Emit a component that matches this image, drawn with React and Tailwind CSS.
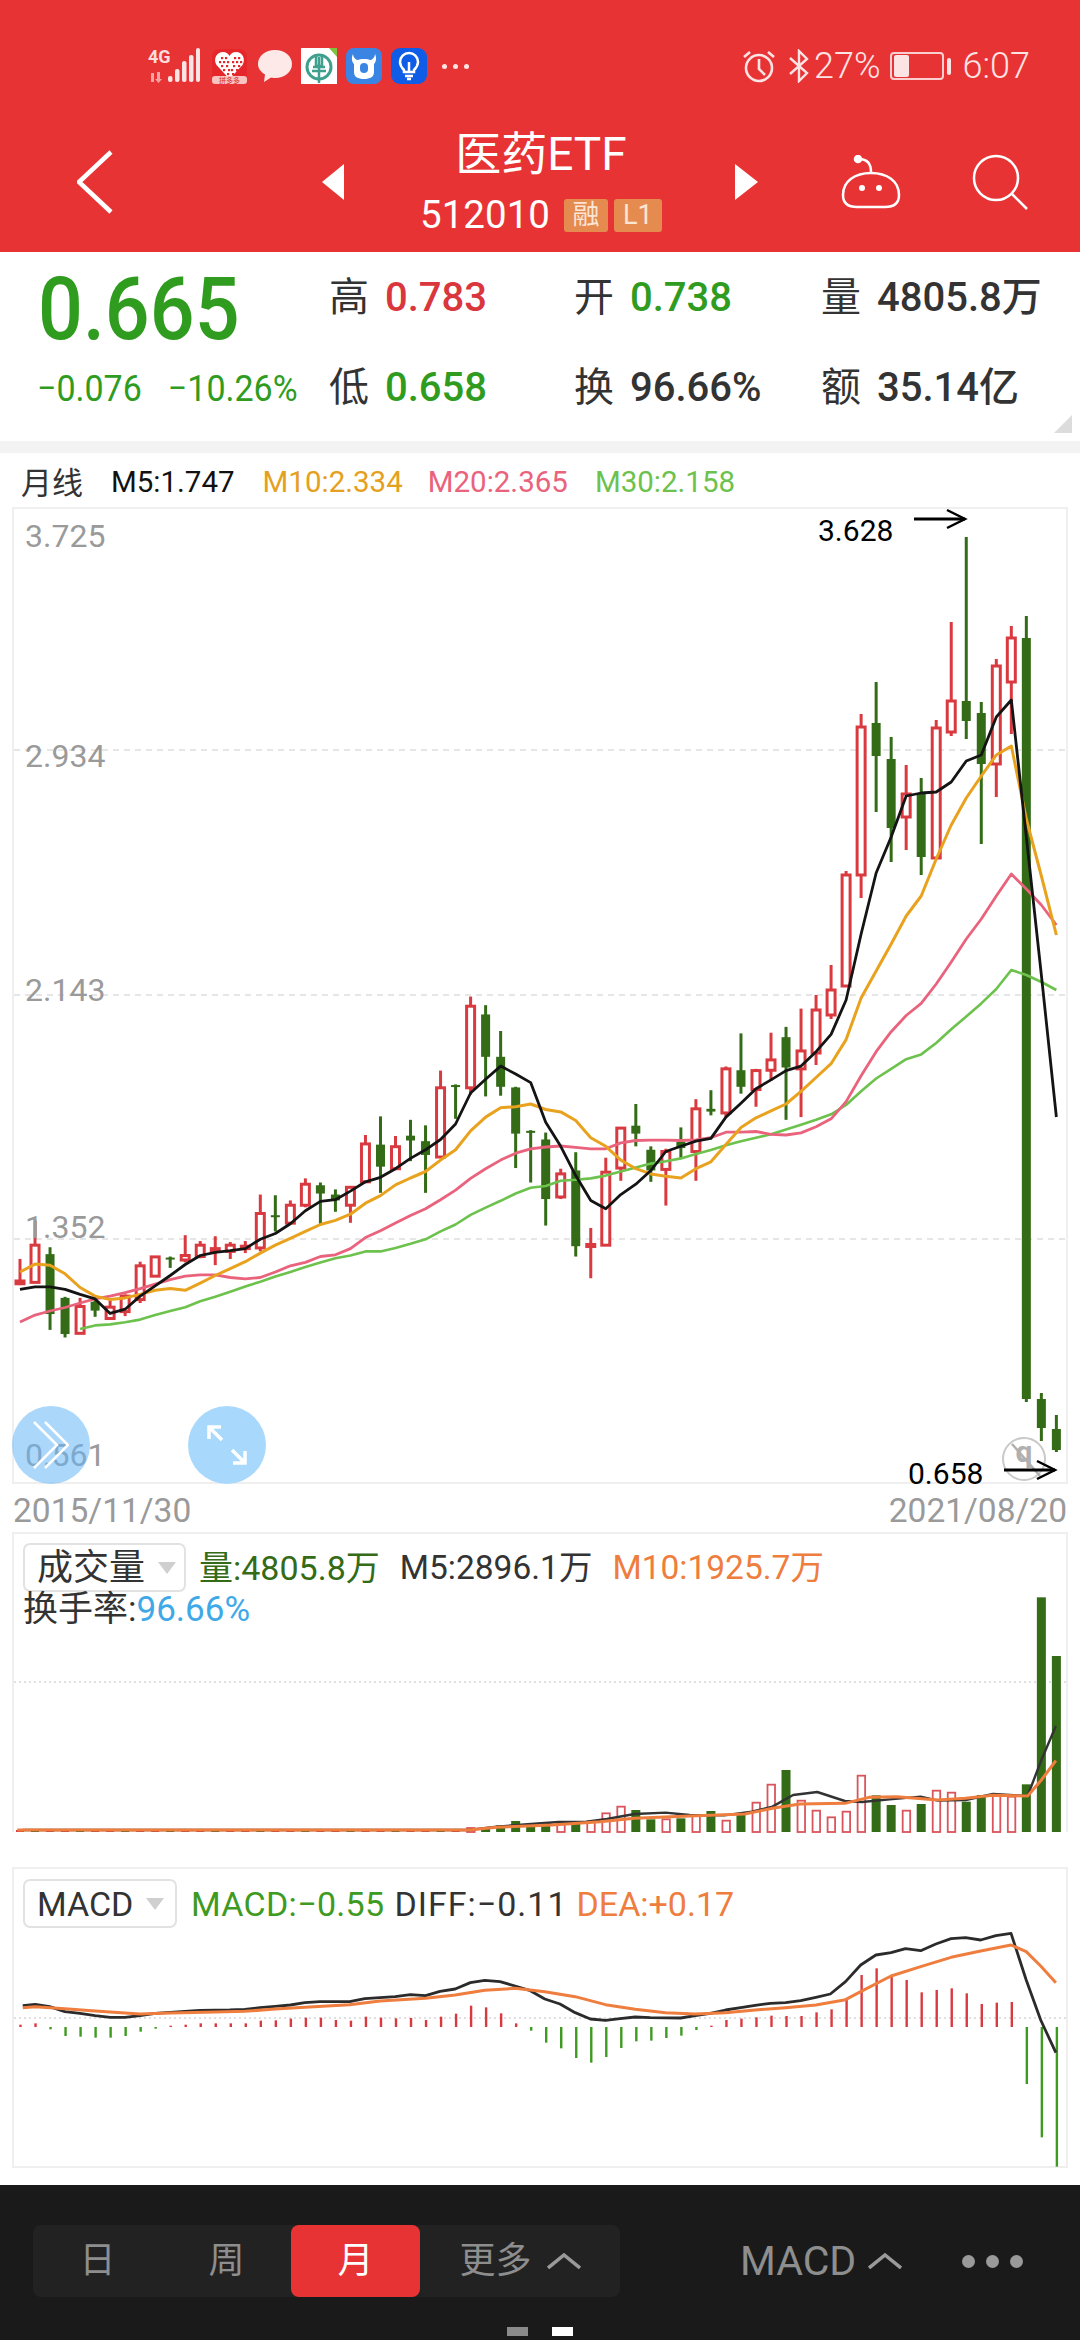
import { Fragment } from "react";

const xAt = (i) => 20 + 15.02 * i;
const low = (z) => 1000 + z / 2.904; // readings from the lower crop

// wick top, body top, body bottom, wick bottom, up?
const candlesLow = [
  [752, 816, 824, 828, 1], [640, 712, 820, 820, 1], [718, 738, 912, 958, 0], [862, 865, 970, 980, 0], [865, 890, 968, 970, 1],
  [870, 876, 902, 920, 0], [870, 892, 925, 925, 1], [855, 860, 905, 918, 1], [760, 772, 870, 880, 1], [746, 746, 802, 802, 1],
  [745, 748, 752, 778, 0], [683, 742, 755, 762, 1], [700, 712, 745, 750, 1], [686, 722, 730, 770, 1], [703, 712, 730, 752, 1],
  [700, 715, 722, 735, 1], [565, 620, 720, 730, 1], [567, 625, 630, 672, 0], [582, 596, 648, 652, 1], [518, 535, 596, 602, 1],
  [530, 538, 562, 650, 0], [550, 565, 582, 615, 0], [540, 544, 596, 647, 1], [392, 418, 528, 530, 1], [338, 420, 484, 560, 0],
  [395, 426, 490, 490, 1], [348, 394, 408, 468, 0], [364, 410, 450, 560, 0], [205, 255, 456, 458, 1], [245, 247, 252, 345, 0],
  [-10, 18, 255, 275, 1], [15, 42, 165, 280, 0], [90, 165, 252, 278, 0], [252, 254, 388, 488, 0], [378, 380, 384, 530, 0],
  [385, 405, 578, 655, 0], [490, 505, 572, 578, 1], [442, 495, 715, 745, 0], [662, 710, 716, 808, 1], [458, 500, 712, 712, 1],
  [370, 372, 488, 525, 1], [302, 365, 388, 425, 0], [425, 435, 495, 528, 0], [432, 440, 492, 597, 1], [370, 412, 430, 460, 0],
  [288, 316, 440, 525, 1], [262, 316, 324, 335, 0], [193, 200, 328, 340, 1], [97, 204, 252, 272, 0], [200, 205, 260, 310, 1],
  [95, 174, 204, 235, 1], [78, 108, 196, 348, 0], [25, 148, 200, 340, 1],
].map(([a, b, c, d, up]) => [low(a), low(b), low(c), low(d), up]);

const candlesHigh = [
  [995, 1010, 1053, 1065, 1], [965, 990, 1015, 1019, 1], [871, 875, 986, 986, 1], [714, 727, 875, 898, 1], [682, 723, 756, 812, 0],
  [737, 759, 828, 862, 0], [765, 794, 817, 850, 1], [778, 794, 857, 875, 0], [720, 728, 858, 858, 1], [622, 701, 732, 736, 1],
  [537, 701, 721, 739, 0], [702, 713, 764, 844, 0], [659, 666, 764, 797, 1], [626, 638, 682, 734, 1], [616, 638, 1399, 1402, 0],
  [1393, 1399, 1428, 1441, 0], [1415, 1429, 1450, 1452, 0],
];
const candles = [...candlesLow, ...candlesHigh];

const ma5 = [
  ...[840, 833, 833, 840, 855, 868, 910, 898, 860, 830, 800, 768, 742, 733, 728, 722, 695, 678, 650, 612, 585, 580, 555, 528, 515, 490, 460, 435, 405, 360, 270, 230, 192, 215, 240,
    355, 425, 510, 582, 606, 565, 535, 495, 440, 425, 410, 402, 340, 300, 258, 232, 205, 192, 150, 100].map(low),
  1000, 934, 873, 837, 796, 793, 792, 782, 761, 755, 717, 700, 837, 975, 1117,
];
const ma10 = [
  ...[790, 767, 770, 795, 835, 860, 870, 865, 855, 843, 838, 843, 822, 800, 780, 760, 735, 712, 692, 672, 652, 640, 622, 590, 568, 537, 517, 498, 465, 435, 380, 340, 313, 310, 302,
    318, 325, 350, 400, 425, 465, 490, 505, 512, 517, 490, 470, 420, 370, 342, 322, 302, 265, 225, 185, 115].map(low),
  998, 971, 944, 916, 896, 859, 825, 798, 776, 755, 746, 819, 876, 935,
];
const ma20 = [
  ...[935, 915, 903, 893, 880, 868, 860, 850, 838, 825, 812, 802, 798, 798, 806, 810, 806, 790, 772, 762, 745, 740, 722, 690, 670, 648, 626, 606, 580, 552, 518, 490, 465, 445, 432,
    427, 424, 428, 432, 432, 415, 408, 407, 407, 408, 406, 400, 384, 384, 382, 390, 392, 386, 368, 345, 295, 220, 150, 92, 45, 10].map(low),
  984, 962, 939, 919, 896, 874, 889, 905, 925,
];
const ma30 = [
  ...[955, 945, 942, 936, 928, 915, 903, 892, 875, 862, 847, 832, 818, 803, 790, 775, 762, 750, 742, 730, 730, 720, 708, 695, 672, 652, 624, 603, 583, 562, 545,
    540, 525, 522, 518, 510, 498, 486, 475, 468, 460, 447, 436, 422, 410, 400, 390, 376, 362, 348, 332, 305, 265, 228, 200, 172, 158, 125, 85, 48, 10].map(low),
  989, 970, 975, 982, 990,
];

const toPoints = (ys, start = 0) => ys.map((y, i) => `${xAt(i + start)},${y.toFixed(1)}`).join(" ");

// volume bars from i30 on: top reading, up?
const volumes = [
  [924, 1], [925, 0], [916, 0], [903, 0], [915, 0], [915, 0], [912, 1], [905, 0], [905, 1], [880, 1],
  [860, 1], [870, 0], [898, 0], [898, 1], [895, 0], [885, 1], [873, 0], [902, 1], [885, 0], [848, 1],
  [794, 1], [750, 0], [842, 1], [872, 1], [892, 1], [875, 1], [767, 1], [826, 0], [855, 0], [872, 1],
  [852, 0], [812, 1], [818, 1], [845, 0], [825, 0], [828, 1], [830, 1], [793, 0], [232, 0], [408, 0],
];
const volX = (z) => z / 1.45;
const volY = (z) => 1520 + z / 3;
const volBlack = [[33, 930], [680, 930], [720, 920], [770, 912], [810, 906], [850, 905], [880, 897], [920, 882], [965, 878], [1000, 885], [1050, 886], [1090, 875], [1120, 860], [1150, 825], [1185, 816], [1225, 843], [1250, 846], [1290, 838], [1335, 830], [1360, 842], [1400, 840], [1440, 822], [1490, 828], [1510, 720], [1531, 618]];
const volOrange = [[25, 930], [680, 930], [720, 922], [800, 915], [870, 905], [920, 895], [1000, 888], [1080, 882], [1120, 865], [1160, 852], [1225, 850], [1260, 832], [1300, 830], [1360, 840], [1400, 835], [1440, 826], [1490, 828], [1510, 780], [1531, 722]];

const macdY = (z) => 1850 + z / 3;
const macdBars = [524, 520, 538, 558, 560, 563, 563, 558, 545, 536, 527, 524, 520, 520, 520, 520, 512, 511, 506, 503, 503, 510, 512, 500, 503, 505, 504, 510, 500, 491, 467, 472, 490, 520, 542, 578, 595, 624, 638, 621, 594, 574, 572, 564, 557, 540, 527, 510, 506, 502, 497, 498, 498, 487, 478, 450, 375, 355, 378, 390, 427, 420, 415, 430, 462, 458, 456, 702, 862, 950];
const macdBlack = [[33, 467], [51, 463], [72, 470], [94, 485], [116, 490], [138, 497], [160, 502], [181, 502], [203, 497], [225, 490], [268, 484], [290, 481], [333, 480], [355, 478], [377, 473], [399, 469], [421, 465], [442, 458], [464, 455], [507, 455], [529, 446], [551, 443], [573, 440], [595, 434], [617, 437], [638, 424], [660, 417], [682, 398], [703, 391], [725, 395], [747, 408], [769, 422], [790, 447], [812, 462], [834, 488], [856, 507], [878, 511], [899, 506], [921, 501], [943, 503], [987, 504], [1008, 497], [1030, 490], [1052, 480], [1074, 473], [1095, 466], [1117, 460], [1139, 458], [1161, 452], [1183, 442], [1204, 432], [1226, 395], [1248, 345], [1270, 315], [1292, 308], [1313, 296], [1335, 302], [1357, 282], [1379, 266], [1400, 263], [1422, 270], [1444, 257], [1466, 250], [1488, 390], [1509, 510], [1531, 608]];
const macdOrange = [[33, 473], [51, 470], [94, 476], [138, 483], [203, 492], [247, 489], [312, 486], [355, 484], [399, 477], [442, 472], [507, 464], [551, 453], [617, 445], [660, 435], [703, 421], [747, 415], [790, 425], [834, 440], [878, 464], [921, 478], [965, 488], [1008, 492], [1052, 488], [1095, 480], [1139, 473], [1183, 465], [1226, 449], [1248, 425], [1292, 378], [1335, 350], [1379, 322], [1422, 303], [1466, 285], [1488, 305], [1509, 348], [1531, 398]];

// dots of the heart logo
const heartDots = [
  [9, 8], [13, 8], [22, 8], [26, 8], [7, 12], [11, 12], [15, 12], [20, 12], [24, 12], [28, 12],
  [9, 16], [14, 16], [21, 16], [26, 16], [11, 20], [16, 20], [19, 20], [24, 20], [15, 24], [20, 24],
];

const Caret = () => (
  <svg width="34" height="16" viewBox="0 0 34 16" fill="none" stroke="#9a9a9a" strokeWidth="3.500">
    <polyline points="1,15 17,2 33,15" />
  </svg>
);

const Arrow = ({ x, y }) => (
  <g stroke="#000" fill="none">
    <line x1={x} y1={y} x2={x + 51} y2={y} strokeWidth="3" />
    <polyline points={`${x + 33},${y - 9} ${x + 51},${y} ${x + 33},${y + 9}`} strokeWidth="2.500" />
  </g>
);

const ChartLabel = ({ className, children }) => (
  <span className={`absolute left-[11px] text-[32px] leading-none text-[#9a9a9a] ${className}`}>{children}</span>
);

const Dropdown = ({ label, className }) => (
  <div className={`flex h-[49px] shrink-0 items-center rounded-[7px] border-2 border-[#e2e2e2] bg-white ${className}`}>
    <span className="leading-none text-[#333]">{label}</span>
    <svg className="ml-[13px]" width="18" height="12" viewBox="0 0 18 12"><path d="M0 0H18L9 12Z" fill="#cfcfcf" /></svg>
  </div>
);

function StatusBar() {
  return (
    <div className="mt-[48px] flex h-[36px] items-center pl-[148px]">
      <svg width="52" height="44" viewBox="0 -4 52 44">
        <text x="0" y="15" fontFamily="Roboto" fontWeight="700" fontSize="18" fill="#fbdcdc">4G</text>
        <path d="M3 25h3v9H3z M9 24v7H7l3.500 4 3.500-4h-2v-7z" fill="#f6a3a3" />
        <g fill="#fde4e4">
          <rect x="20" y="28" width="4.500" height="6" rx="2" />
          <rect x="27" y="21" width="4.500" height="13" rx="2" />
          <rect x="34" y="13" width="4.500" height="21" rx="2" />
          <rect x="41" y="7" width="4.500" height="27" rx="2" />
          <rect x="48" y="0" width="4" height="34" rx="2" />
        </g>
      </svg>
      {/* pinduoduo */}
      <svg className="ml-[12px]" width="35" height="35" viewBox="0 0 35 35">
        <rect width="35" height="35" rx="8" fill="#e5262b" />
        <path d="M17.500 30 4.500 16C1 10 4.500 3 11 3c3 0 5 1.500 6.500 4C19 4.500 21 3 24 3c6.500 0 10 7 6.500 13Z" fill="#fff" />
        <g fill="#e5262b">
          {heartDots.map(([x, y]) => <rect key={`${x}-${y}`} x={x} y={y} width="2.200" height="2.200" />)}
        </g>
        <rect y="27" width="35" height="8" rx="3" fill="#f8c4bf" />
        <text x="17.500" y="33.500" textAnchor="middle" fontFamily="Noto Sans CJK SC" fontSize="7" fill="#d4262b">拼多多</text>
      </svg>
      <svg className="ml-[11px]" width="34" height="32" viewBox="0 0 34 32">
        <path d="M17 0c9.500 0 17 6 17 14s-7.500 14-17 14c-2 0-3-.3-4-.5L6 32l1-7.500C3 22 0 18.500 0 14 0 6 7.500 0 17 0Z" fill="#fee9e9" />
      </svg>
      {/* bank logo */}
      <svg className="ml-[9px]" width="36" height="36" viewBox="0 0 36 36">
        <rect width="36" height="36" fill="#fff" />
        <path d="M28 0h8v9Z" fill="#7fc241" />
        <circle cx="18" cy="19" r="12" fill="none" stroke="#3fa08e" strokeWidth="3" />
        <path d="M15 6v12h6V6M18 9v26M11 23h14M12 19h12" fill="none" stroke="#3fa08e" strokeWidth="2.500" />
      </svg>
      {/* cow icon */}
      <svg className="ml-[9px]" width="36" height="36" viewBox="0 0 36 36">
        <rect width="36" height="36" rx="8" fill="#3a85e4" />
        <path d="M7 6c0 3 2 5 4 6 4-1.500 10-1.500 14 0 2-1 4-3 4-6 2 4 1 8-1 10v8c0 5-4 7-10 7S8 29 8 24v-8C6 14 5 10 7 6Z" fill="#fff" />
        <rect x="14" y="15" width="8" height="10" rx="4" fill="#3a85e4" />
      </svg>
      {/* bulb icon */}
      <svg className="ml-[9px]" width="36" height="36" viewBox="0 0 36 36">
        <rect width="36" height="36" rx="9" fill="#0f5de6" />
        <path d="M13 22c-2-2-4-4-4-8a9 9 0 0 1 18 0c0 4-2 6-4 8v2H13Z" fill="none" stroke="#fff" strokeWidth="2.500" />
        <path d="M14 28h8M16 31h4M18 14v10" stroke="#fff" strokeWidth="2.500" />
      </svg>
      <div className="ml-[15px] flex gap-[6px]">
        <span className="size-[5px] rounded-full bg-[#fde4e4]" />
        <span className="size-[5px] rounded-full bg-[#fde4e4]" />
        <span className="size-[5px] rounded-full bg-[#fde4e4]" />
      </div>

      {/* right side */}
      <svg className="ml-[272px]" width="36" height="36" viewBox="0 0 36 36" fill="none" stroke="#fde4e4" strokeWidth="2.600">
        <circle cx="18" cy="20" r="13" />
        <path d="M18 11v10l6 6M3 9l6-5M33 9l-6-5" />
      </svg>
      <svg className="ml-[12px]" width="20" height="34" viewBox="0 0 20 34" fill="none" stroke="#fde4e4" strokeWidth="2.400">
        <path d="M1 9l17 15-8 8V2l8 8L1 25" />
      </svg>
      <span className="ml-[5px] text-[36px] font-light leading-none text-[#fde4e4]">27%</span>
      <div className="ml-[9px] flex items-center">
        <div className="flex h-[28px] w-[54px] items-center rounded-[4px] border-2 border-[#fbcfcf] pl-[2px]">
          <span className="h-[22px] w-[15px] rounded-[2px] bg-[#fde4e4]" />
        </div>
        <span className="ml-[3px] h-[17px] w-[4px] rounded-[2px] bg-[#fde4e4]" />
      </div>
      <span className="ml-[12px] text-[36px] font-light leading-none text-[#fde4e4]">6:07</span>
    </div>
  );
}

function NavRow() {
  return (
    <div className="mt-[47px] flex items-center pr-[52px]">
      <svg className="ml-[77px]" width="36" height="64" viewBox="0 0 36 64" fill="none" stroke="#fff" strokeWidth="4.500">
        <polyline points="34,2 2,32 34,62" />
      </svg>
      <svg className="ml-[209px]" width="22" height="36" viewBox="0 0 22 36"><path d="M22 0V36L0 18Z" fill="#fff" /></svg>
      <div className="flex flex-1 flex-col items-center pl-[3px]">
        <div className="text-[46px] leading-[46px] text-white">医药ETF</div>
        <div className="mt-[22px] flex h-[33px] items-center text-white">
          <span className="text-[38.500px] leading-none">512010</span>
          <span className="ml-[14px] flex h-[33px] w-[44px] items-center justify-center rounded-[3px] bg-[#e58b50] text-[27px] leading-none text-[#fbe6d6]">融</span>
          <span className="ml-[6px] flex h-[33px] w-[48px] items-center justify-center rounded-[3px] bg-[#e58b50] text-[27px] leading-none text-[#fbe6d6]">L1</span>
        </div>
      </div>
      <svg width="23" height="36" viewBox="0 0 23 36"><path d="M0 0V36L23 18Z" fill="#fff" /></svg>
      <svg className="ml-[83px]" width="60" height="54" viewBox="0 0 60 54" fill="none" stroke="#fff" strokeWidth="2.500">
        <circle cx="17" cy="4" r="3" fill="#fff" />
        <path d="M18 4c8 0 12 4 12 13" />
        <path d="M2 40c0-14 12-22 28-22s28 8 28 22c0 9-6 12-14 12H16C8 52 2 49 2 40Z" />
        <circle cx="21" cy="33" r="3" fill="#fff" stroke="none" />
        <circle cx="38" cy="33" r="3" fill="#fff" stroke="none" />
      </svg>
      <svg className="ml-[71px]" width="56" height="56" viewBox="0 0 56 56" fill="none" stroke="#fff" strokeWidth="2.500">
        <circle cx="24" cy="24" r="22" />
        <path d="M40 40l15 15" />
      </svg>
    </div>
  );
}

function Quote() {
  const label = "text-[40px] leading-none text-[#333]";
  const value = "ml-[16px] text-[40px] font-medium leading-none";
  const cell = "flex items-center";
  return (
    <div className="relative grid h-[189px] grid-cols-[329px_245px_247px_1fr] grid-rows-[91px_90px]">
      <div className="flex items-center pl-[38px] pt-[24px]">
        <span className="origin-center scale-y-[1.1] text-[79px] font-medium leading-none text-[#2f9c1f]">0.665</span>
      </div>
      <div className={cell}><span className={label}>高</span><span className={`${value} text-[#d9363e]`}>0.783</span></div>
      <div className={cell}><span className={label}>开</span><span className={`${value} text-[#2f9c1f]`}>0.738</span></div>
      <div className={cell}><span className={label}>量</span><span className={`${value} text-[#333]`}>4805.8万</span></div>
      <div className="flex items-center pl-[37px] text-[34px] leading-none text-[#2f9c1f]">
        <span className="scale-y-[1.08]">−0.076</span>
        <span className="ml-[26px] scale-y-[1.08]">−10.26%</span>
      </div>
      <div className={cell}><span className={label}>低</span><span className={`${value} text-[#2f9c1f]`}>0.658</span></div>
      <div className={cell}><span className={label}>换</span><span className={`${value} text-[#333]`}>96.66%</span></div>
      <div className={cell}><span className={label}>额</span><span className={`${value} text-[#333]`}>35.14亿</span></div>
      <svg className="absolute bottom-[8px] right-[8px]" width="18" height="18" viewBox="0 0 18 18"><path d="M18 0V18H0Z" fill="#dcdcdc" /></svg>
    </div>
  );
}

function KChart() {
  return (
    <div className="relative mx-[12px] h-[977px] border-2 border-[#efefef]">
      <svg className="absolute left-[-2px] top-[-2px]" width="1056" height="977" viewBox="12 507 1056 977" fill="none">
        {[750, 995, 1239].map((y) => (
          <line key={y} x1="14" x2="1066" y1={y} y2={y} stroke="#dedede" strokeWidth="1.500" strokeDasharray="6 5" />
        ))}
        {candles.map(([a, b, c, d, up], i) => {
          const x = xAt(i);
          const color = up ? "#d93a40" : "#336b17";
          return (
            <Fragment key={i}>
              <line x1={x} x2={x} y1={a} y2={d} stroke={color} strokeWidth="3" />
              {up ? (
                <rect x={x - 4} y={b} width="8" height={Math.max(c - b, 1)} fill="#fff" stroke={color} strokeWidth="3" />
              ) : (
                <rect x={x - 4.500} y={b} width="9" height={Math.max(c - b, 2)} fill={color} />
              )}
            </Fragment>
          );
        })}
        <polyline points={toPoints(ma30, 4)} stroke="#6cc24c" strokeWidth="2.600" strokeLinejoin="round" />
        <polyline points={toPoints(ma20)} stroke="#e9637c" strokeWidth="2.800" strokeLinejoin="round" />
        <polyline points={toPoints(ma10)} stroke="#e9a21e" strokeWidth="3" strokeLinejoin="round" />
        <polyline points={toPoints(ma5)} stroke="#141414" strokeWidth="2.800" strokeLinejoin="round" />
        <Arrow x={914} y={519} />
        {/* watermark */}
        <circle cx="1024" cy="1459" r="21" stroke="#c9c9c9" strokeWidth="2" fill="#fff" fillOpacity="0.5" />
        <text x="1024" y="1462" textAnchor="middle" fontFamily="Roboto" fontWeight="700" fontSize="30" fill="#b0b0b0">q</text>
        <line x1="1012" y1="1444" x2="1040" y2="1476" stroke="#b0b0b0" strokeWidth="2.500" />
        <Arrow x={1004} y={1470} />
      </svg>

      <ChartLabel className="top-[11px]">3.725</ChartLabel>
      <ChartLabel className="top-[231px]">2.934</ChartLabel>
      <ChartLabel className="top-[465px]">2.143</ChartLabel>
      <ChartLabel className="top-[702px]">1.352</ChartLabel>
      <ChartLabel className="top-[930px]">0.561</ChartLabel>
      <span className="absolute left-[804px] top-[7px] text-[30px] leading-none text-black">3.628</span>
      <span className="absolute left-[894px] top-[950px] text-[30px] leading-none text-black">0.658</span>

      <div className="absolute bottom-[-2px] left-[-2px] flex size-[78px] items-center justify-center rounded-full bg-[#66b7f8]/55">
        <svg width="36" height="48" viewBox="0 0 36 48" fill="none" stroke="#fff" strokeWidth="2.500">
          <polyline points="1,1 24,24 1,47" />
          <polyline points="12,1 35,24 12,47" />
        </svg>
      </div>
      <div className="absolute bottom-[-2px] left-[174px] flex size-[78px] items-center justify-center rounded-full bg-[#a8d9fc]">
        <svg width="40" height="40" viewBox="0 0 40 40" fill="none" stroke="#fff" strokeWidth="3.500">
          <path d="M2 14V2H14M2 2l13 13M38 26V38H26M38 38 25 25" />
        </svg>
      </div>
    </div>
  );
}

function Volume() {
  return (
    <div className="relative mx-[12px] h-[300px] border-2 border-b-0 border-[#efefef]">
      <svg className="absolute left-[-2px] top-[-2px]" width="1056" height="302" viewBox="12 1532 1056 302" fill="none">
        <line x1="14" x2="1066" y1="1682" y2="1682" stroke="#d6d6d6" strokeWidth="1.500" strokeDasharray="2 3" />
        {Array.from({ length: 30 }).map((_, i) => (
          <rect key={i} x={xAt(i) - 4} y="1830" width="8" height="2" fill={i % 3 === 1 ? "#336b17" : "#d93a40"} />
        ))}
        {volumes.map(([top, up], i) => {
          const x = xAt(i + 30);
          const y = volY(top);
          return up ? (
            <rect key={i} x={x - 3.500} y={y} width="7.500" height={1832 - y} fill="#fff" stroke="#d9555b" strokeWidth="1.800" />
          ) : (
            <rect key={i} x={x - 4.500} y={y} width="9" height={1832 - y} fill="#336b17" />
          );
        })}
        <polyline points={volBlack.map(([x, y]) => `${volX(x)},${volY(y)}`).join(" ")} stroke="#333" strokeWidth="2.400" strokeLinejoin="round" />
        <polyline points={volOrange.map(([x, y]) => `${volX(x)},${volY(y)}`).join(" ")} stroke="#ee7d3e" strokeWidth="3" strokeLinejoin="round" />
      </svg>
      <div className="absolute left-[9px] top-[9px] flex flex-col text-[34px] leading-none">
        <div className="flex items-center">
          <Dropdown label="成交量" className="w-[163px] pl-[12px] text-[36px]" />
          <span className="ml-[13px] text-[#336b17]">量:4805.8万</span>
          <span className="ml-[20px] text-[33.500px] text-[#333]">M5:2896.1万</span>
          <span className="ml-[20px] text-[33.500px] text-[#ee7d3e]">M10:1925.7万</span>
        </div>
        <div className="text-[35px] text-[#333]">换手率:<span className="text-[#3fa9e8]">96.66%</span></div>
      </div>
    </div>
  );
}

function Macd() {
  return (
    <div className="relative mx-[12px] mt-[35px] h-[301px] border-2 border-[#efefef]">
      <svg className="absolute left-[-2px] top-[-2px]" width="1056" height="301" viewBox="12 1867 1056 301" fill="none">
        <line x1="14" x2="1066" y1="2018" y2="2018" stroke="#d6d6d6" strokeWidth="1.500" strokeDasharray="2 3" />
        {macdBars.map((top, i) => {
          const y = macdY(top);
          const up = top < 532;
          const x = xAt(i) + 0.500;
          return <line key={i} x1={x} x2={x} y1={y} y2="2027" stroke={up ? "#d93a40" : "#3f9a22"} strokeWidth="2.400" />;
        })}
        <polyline points={macdBlack.map(([x, y]) => `${volX(x)},${macdY(y)}`).join(" ")} stroke="#2b2b2b" strokeWidth="2.800" strokeLinejoin="round" />
        <polyline points={macdOrange.map(([x, y]) => `${volX(x)},${macdY(y)}`).join(" ")} stroke="#ee7d3e" strokeWidth="3" strokeLinejoin="round" />
      </svg>
      <div className="absolute left-[9px] top-[10px] flex items-center text-[34px] leading-none">
        <Dropdown label="MACD" className="w-[154px] pl-[12px]" />
        <span className="ml-[14px] tracking-[0.3px] text-[#3f9a22]">MACD:−0.55</span>
        <span className="ml-[10px] tracking-[1px] text-[#333]">DIFF:−0.11</span>
        <span className="ml-[9px] text-[#ee7d3e]">DEA:+0.17</span>
      </div>
    </div>
  );
}

function BottomBar() {
  const tab = "flex items-center justify-center text-[36px] leading-none text-[#8e8e8e]";
  return (
    <div className="flex flex-1 flex-col bg-[#1a1a1a] pt-[40px]">
      <div className="flex h-[72px] items-center">
        <div className="ml-[33px] flex h-[72px] w-[587px] rounded-[8px] bg-[#222]">
          <div className={`${tab} w-[129px]`}>日</div>
          <div className={`${tab} w-[129px]`}>周</div>
          <div className="flex w-[129px] items-center justify-center rounded-[8px] bg-[#e83335] text-[36px] leading-none text-white">月</div>
          <div className={`${tab} flex-1 gap-[15px]`}>更多<Caret /></div>
        </div>
        <span className="ml-[120px] text-[41px] leading-none text-[#8e8e8e]">MACD</span>
        <span className="ml-[12px]"><Caret /></span>
        <div className="ml-[60px] flex gap-[11px]">
          <span className="size-[13px] rounded-full bg-[#9a9a9a]" />
          <span className="size-[13px] rounded-full bg-[#9a9a9a]" />
          <span className="size-[13px] rounded-full bg-[#9a9a9a]" />
        </div>
      </div>
      <div className="mt-[30px] flex justify-center gap-[24px]">
        <span className="h-[9px] w-[21px] bg-[#8a8a8a]" />
        <span className="h-[9px] w-[21px] bg-white" />
      </div>
    </div>
  );
}

export default function App() {
  return (
    <div className="flex h-[2340px] w-[1080px] flex-col overflow-hidden bg-white font-[family-name:Roboto,'Noto_Sans_CJK_SC',sans-serif]">
      <header className="h-[252px] bg-[#e83335]">
        <StatusBar />
        <NavRow />
      </header>
      <Quote />
      <div className="h-[12px] bg-[#f3f3f3]" />
      <div className="flex h-[54px] items-center pl-[21px] pt-[6px] text-[29.500px] leading-none">
        <span className="text-[31px] text-[#333]">月线</span>
        <span className="ml-[28px] text-[#111]">M5:1.747</span>
        <span className="ml-[28px] text-[#e5a020]">M10:2.334</span>
        <span className="ml-[25px] text-[#e9637c]">M20:2.365</span>
        <span className="ml-[27px] text-[#6cc24c]">M30:2.158</span>
      </div>
      <KChart />
      <div className="flex h-[48px] items-start justify-between pl-[13px] pr-[13px] pt-[10px] text-[33.500px] leading-none text-[#9a9a9a]">
        <span>2015/11/30</span>
        <span>2021/08/20</span>
      </div>
      <Volume />
      <Macd />
      <div className="h-[17px]" />
      <BottomBar />
    </div>
  );
}
